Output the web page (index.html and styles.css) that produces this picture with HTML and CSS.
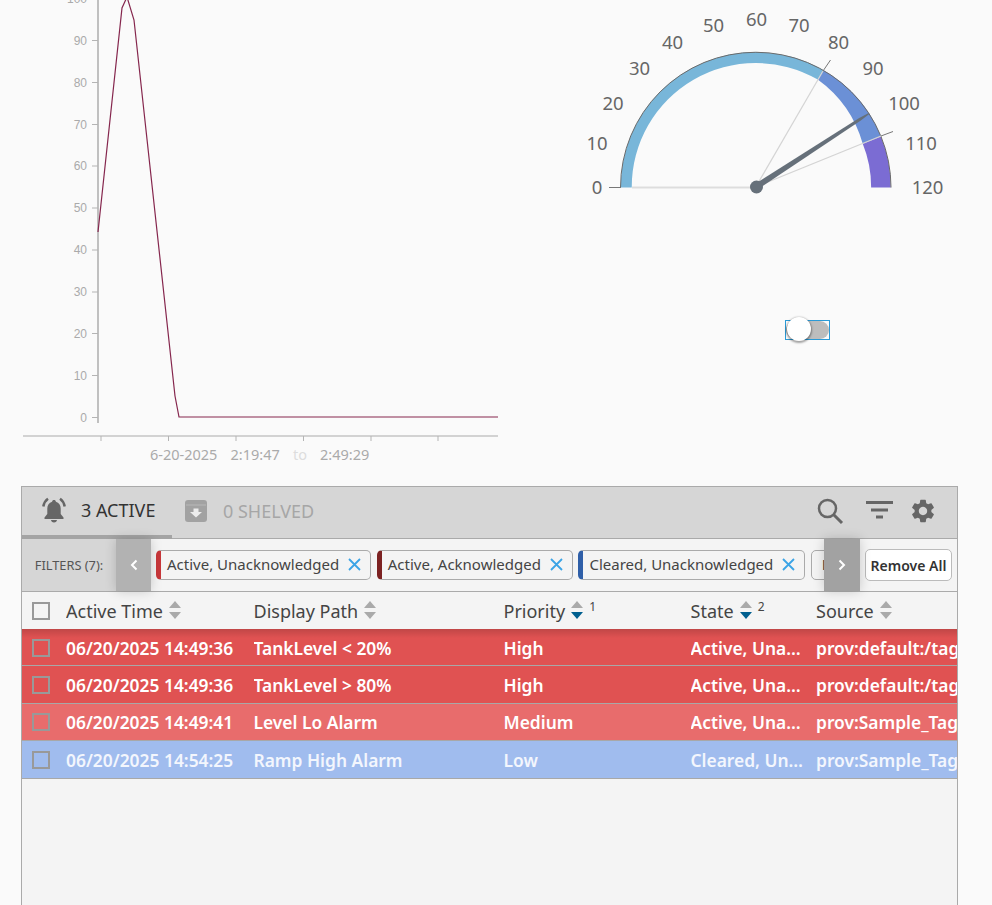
FILE: index.html
```html
<!DOCTYPE html>
<html lang="en">
    <head>
        <meta charset="UTF-8" />
        <meta name="viewport" content="width=device-width, initial-scale=1.0" />
        <title>Tank Dashboard</title>
        <link rel="stylesheet" href="styles.css">
    </head>
    <body>
        <div class="dash">
            <svg class="chart" width="510" height="486" viewBox="0 0 510 486">
                <line class="y-axis" x1="98" y1="-5" x2="98" y2="423" />
                <g class="y-ticks">
                    <line x1="92" y1="-1" x2="98" y2="-1" />
                    <line x1="92" y1="40.5" x2="98" y2="40.5" />
                    <line x1="92" y1="82.5" x2="98" y2="82.5" />
                    <line x1="92" y1="124.5" x2="98" y2="124.5" />
                    <line x1="92" y1="166" x2="98" y2="166" />
                    <line x1="92" y1="208" x2="98" y2="208" />
                    <line x1="92" y1="250" x2="98" y2="250" />
                    <line x1="92" y1="292" x2="98" y2="292" />
                    <line x1="92" y1="333.5" x2="98" y2="333.5" />
                    <line x1="92" y1="375.5" x2="98" y2="375.5" />
                    <line x1="92" y1="417.5" x2="98" y2="417.5" />
                </g>
                <g class="y-labels">
                    <text x="87" y="3">100</text>
                    <text x="87" y="45">90</text>
                    <text x="87" y="87">80</text>
                    <text x="87" y="129">70</text>
                    <text x="87" y="170">60</text>
                    <text x="87" y="212">50</text>
                    <text x="87" y="254">40</text>
                    <text x="87" y="296">30</text>
                    <text x="87" y="338">20</text>
                    <text x="87" y="380">10</text>
                    <text x="87" y="422">0</text>
                </g>
                <polyline class="trace" points="98,232 122,8 127,-3 134,20 175,396 179,417 498,417" />
                <line class="x-axis" x1="23" y1="436" x2="498" y2="436" />
                <g class="x-ticks">
                    <line x1="101" y1="436" x2="101" y2="441" />
                    <line x1="168.5" y1="436" x2="168.5" y2="441" />
                    <line x1="236" y1="436" x2="236" y2="441" />
                    <line x1="303.5" y1="436" x2="303.5" y2="441" />
                    <line x1="371" y1="436" x2="371" y2="441" />
                    <line x1="438" y1="436" x2="438" y2="441" />
                </g>
                <text class="range" x="150" y="460">6-20-2025</text>
                <text class="range" x="230.5" y="460">2:19:47</text>
                <text class="range range-to" x="293" y="460">to</text>
                <text class="range" x="320" y="460">2:49:29</text>
            </svg>

            <svg class="gauge" width="390" height="210" viewBox="570 0 390 210">
                <path class="band-low" d="M620.75 187.500 A135 135 0 0 1 823.25 70.100 L817.75 79.600 A124 124 0 0 0 631.75 187.500 Z" />
                <path class="band-mid" d="M823.25 70.100 A135 135 0 0 1 880.95 136.400 L862.75 143.800 A120 120 0 0 0 817.75 79.600 Z" />
                <path class="band-high" d="M880.95 136.400 A135 135 0 0 1 890.75 187.500 L871.15 187.500 A115.4 115.4 0 0 0 862.75 143.800 Z" />
                <path class="rim" d="M620.5 187.500 A135.25 135.25 0 0 1 891 187.500" />
                <line class="mark-light" x1="632" y1="187.500" x2="752" y2="187.500" />
                <line class="mark-thin" x1="755.75" y1="187" x2="823" y2="71" />
                <line class="mark-thin" x1="755.75" y1="187" x2="881" y2="136" />
                <line class="mark-dark" x1="609" y1="187.500" x2="621" y2="187.500" />
                <line class="mark-dark" x1="823" y1="71" x2="830.5" y2="60" />
                <line class="mark-dark" x1="881" y1="136" x2="893" y2="131.500" />
                <polygon class="needle" points="754.1,184.500 859.2,118 868.7,113.100 869.3,113.900 860.8,120.600 757.4,189.500" />
                <circle class="hub" cx="756.5" cy="187" r="6.5" />
                <g class="dial">
                    <text x="597" y="194">0</text>
                    <text x="597" y="150">10</text>
                    <text x="613" y="110">20</text>
                    <text x="639.5" y="75">30</text>
                    <text x="672.5" y="49">40</text>
                    <text x="713.5" y="32">50</text>
                    <text x="756.5" y="26">60</text>
                    <text x="799" y="32">70</text>
                    <text x="838.5" y="49">80</text>
                    <text x="873" y="75">90</text>
                    <text x="904" y="110">100</text>
                    <text x="921" y="150">110</text>
                    <text x="927.5" y="194">120</text>
                </g>
            </svg>

            <div class="toggle"><span class="track"></span><span class="knob"></span></div>
        </div>

        <div class="alarms">
            <div class="tabs">
                <div class="tab tab-active">
                    <svg width="26" height="26" viewBox="0 0 26 26">
                        <path class="ic-fill" d="M13 3c-1.100 0-1.800.7-1.900 1.700C8 5.600 6.300 8 6.300 11.500v5.500L3.500 20.500v1.500h19v-1.500L19.700 17v-5.500c0-3.500-1.700-5.900-4.800-6.800C14.800 3.700 14.100 3 13 3z" />
                        <path class="ic-fill" d="M10 23h6c0 1-1.300 2.500-3 2.500s-3-1.500-3-2.500z" />
                        <path class="ic-line" d="M7 1.800C4.500 3.500 3 6 2.300 9.500M19 1.800c2.500 1.700 4 4.200 4.700 7.700" />
                    </svg>
                    <span>3 ACTIVE</span>
                </div>
                <div class="tab tab-shelved">
                    <svg width="22" height="22" viewBox="0 0 22 22">
                        <rect class="shelf" width="22" height="22" rx="3" />
                        <line class="shelf-lip" x1="1" y1="5" x2="21" y2="5" />
                        <path class="shelf-arrow" d="M8.500 8.500h5v3.500h3.500L11 17.500 5 12h3.500z" />
                    </svg>
                    <span>0 SHELVED</span>
                </div>
                <div class="tools">
                    <svg class="tool-search" width="28" height="28" viewBox="0 0 28 28">
                        <circle class="ic-line" cx="11.500" cy="11.500" r="8.500" />
                        <line class="ic-line ic-heavy" x1="17.500" y1="17.500" x2="26" y2="26" />
                    </svg>
                    <svg class="tool-filter" width="27" height="20" viewBox="0 0 27 20">
                        <rect class="ic-fill" y="1" width="27" height="3" />
                        <rect class="ic-fill" x="5" y="8.500" width="17" height="3" />
                        <rect class="ic-fill" x="10" y="15.500" width="7" height="3" />
                    </svg>
                    <svg width="28" height="28" viewBox="0 0 24 24">
                        <path class="ic-fill" d="M19.140 12.940c.04-.3.06-.61.06-.94 0-.32-.02-.64-.07-.94l2.030-1.580c.18-.14.23-.41.12-.61l-1.920-3.320c-.12-.22-.37-.29-.59-.22l-2.390.96c-.5-.38-1.030-.7-1.620-.94l-.36-2.540c-.04-.24-.24-.41-.48-.41h-3.840c-.24 0-.43.17-.47.41l-.36 2.540c-.59.24-1.130.57-1.620.94l-2.390-.96c-.22-.08-.47 0-.59.22L2.740 8.870c-.12.21-.08.47.12.61l2.030 1.580c-.05.3-.09.63-.09.94s.02.64.07.94l-2.030 1.580c-.18.14-.23.41-.12.61l1.920 3.320c.12.22.37.29.59.22l2.390-.96c.5.38 1.030.7 1.620.94l.36 2.540c.05.24.24.41.48.41h3.840c.24 0 .44-.17.47-.41l.36-2.540c.59-.24 1.130-.56 1.620-.94l2.390.96c.22.08.47 0 .59-.22l1.920-3.320c.12-.22.07-.47-.12-.61l-2.010-1.580zM12 15.600c-1.980 0-3.600-1.620-3.600-3.600s1.620-3.600 3.600-3.600 3.600 1.620 3.600 3.600-1.620 3.600-3.600 3.600z" />
                    </svg>
                </div>
            </div>

            <div class="filters">
                <div class="filters-label">FILTERS (7):</div>
                <div class="pager pager-left">
                    <svg width="8" height="12" viewBox="0 0 8 12"><path d="M6.500 1.500 2 6l4.500 4.500" /></svg>
                </div>
                <div class="chips">
                    <div class="chip chip-red"><span>Active, Unacknowledged</span><svg class="chip-x" width="13" height="13" viewBox="0 0 13 13"><path d="M1 1l11 11M12 1 1 12" /></svg></div>
                    <div class="chip chip-maroon"><span>Active, Acknowledged</span><svg class="chip-x" width="13" height="13" viewBox="0 0 13 13"><path d="M1 1l11 11M12 1 1 12" /></svg></div>
                    <div class="chip chip-blue"><span>Cleared, Unacknowledged</span><svg class="chip-x" width="13" height="13" viewBox="0 0 13 13"><path d="M1 1l11 11M12 1 1 12" /></svg></div>
                    <div class="chip chip-plain"><span>High</span></div>
                </div>
                <div class="pager pager-right">
                    <svg width="8" height="12" viewBox="0 0 8 12"><path d="M1.500 1.500 6 6l-4.500 4.500" /></svg>
                </div>
                <div class="filters-end">
                    <button class="remove-all">Remove All</button>
                </div>
            </div>

            <div class="row head">
                <div class="cell-check"><span class="check"></span></div>
                <div class="cell">Active Time <span class="sort"><i class="up"></i><i class="down"></i></span></div>
                <div class="cell">Display Path <span class="sort"><i class="up"></i><i class="down"></i></span></div>
                <div class="cell">Priority <span class="sort sorted"><i class="up"></i><i class="down"></i></span><sup>1</sup></div>
                <div class="cell">State <span class="sort sorted"><i class="up"></i><i class="down"></i></span><sup>2</sup></div>
                <div class="cell">Source <span class="sort"><i class="up"></i><i class="down"></i></span></div>
            </div>
            <div class="row alarm high first">
                <div class="cell-check"><span class="check"></span></div>
                <div class="cell">06/20/2025 14:49:36</div>
                <div class="cell">TankLevel &lt; 20%</div>
                <div class="cell">High</div>
                <div class="cell clip">Active, Unacknowledged</div>
                <div class="cell">prov:default:/tag:TankLevel</div>
            </div>
            <div class="row alarm high">
                <div class="cell-check"><span class="check"></span></div>
                <div class="cell">06/20/2025 14:49:36</div>
                <div class="cell">TankLevel &gt; 80%</div>
                <div class="cell">High</div>
                <div class="cell clip">Active, Unacknowledged</div>
                <div class="cell">prov:default:/tag:TankLevel</div>
            </div>
            <div class="row alarm medium">
                <div class="cell-check"><span class="check"></span></div>
                <div class="cell">06/20/2025 14:49:41</div>
                <div class="cell">Level Lo Alarm</div>
                <div class="cell">Medium</div>
                <div class="cell clip">Active, Unacknowledged</div>
                <div class="cell">prov:Sample_Tags:/tag:Level</div>
            </div>
            <div class="row alarm low">
                <div class="cell-check"><span class="check"></span></div>
                <div class="cell">06/20/2025 14:54:25</div>
                <div class="cell">Ramp High Alarm</div>
                <div class="cell">Low</div>
                <div class="cell clip">Cleared, Unacknowledged</div>
                <div class="cell">prov:Sample_Tags:/tag:Ramp</div>
            </div>
        </div>
    </body>
</html>
```

FILE: styles.css
```css
body {
    font-family: "Noto Sans", sans-serif;
    margin: 0;
    height: 100vh;
    overflow: hidden;
    background-color: #fafafa;
    color: #444;
}

/* top canvas: chart, gauge and toggle */
.dash {
    position: relative;
    display: flex;
    height: 486px;
}
.chart {
    display: block;
}
.gauge {
    display: block;
    margin-left: 60px;
}
.y-axis {
    stroke: #c0c0c0;
    stroke-width: 2;
}
.y-ticks line,
.x-ticks line {
    stroke: #b4b4b4;
    stroke-width: 1;
}
.y-labels text {
    font-family: "Liberation Sans", sans-serif;
    font-size: 12px;
    fill: #aaa;
    text-anchor: end;
}
.trace {
    fill: none;
    stroke: #85264d;
    stroke-width: 1.2;
}
.x-axis {
    stroke: #aaa;
    stroke-width: 1;
}
.range {
    font-size: 14.5px;
    fill: #aaa;
}
.range-to {
    fill: #ddd;
}
.band-low {
    fill: #78b6d9;
}
.band-mid {
    fill: #6b90d6;
}
.band-high {
    fill: #7b6cd3;
}
.rim {
    fill: none;
    stroke: #6a6a6a;
    stroke-width: 1;
}
.mark-light {
    stroke: #ddd;
    stroke-width: 2;
}
.mark-thin {
    stroke: #d4d4d4;
    stroke-width: 1.2;
}
.mark-dark {
    stroke: #777;
    stroke-width: 1;
}
.needle,
.hub {
    fill: #66707a;
}
.dial text {
    font-size: 18.5px;
    fill: #666;
    text-anchor: middle;
}
.toggle {
    position: absolute;
    left: 785px;
    top: 320px;
    display: flex;
    width: 43px;
    height: 18px;
    border: 1px solid #2b9ad6;
}
.track {
    flex: 1;
    background-color: #bdbdbd;
    border-radius: 9px;
}
.knob {
    position: absolute;
    left: 1px;
    top: -4px;
    width: 24px;
    height: 24px;
    border-radius: 50%;
    background-color: #fff;
    box-shadow: 0 1px 2px 1px rgba(0, 0, 0, 0.35);
}

/* alarm table */
.alarms {
    margin-left: 21px;
    width: 935px;
    height: 418px;
    border: 1px solid #aaa;
    border-bottom: none;
    background-color: #f4f4f4;
    overflow: hidden;
}
.tabs {
    display: flex;
    align-items: center;
    height: 52px;
    background-color: #d6d6d6;
    box-sizing: border-box;
    border-bottom: 1px solid #aaa;
}
.tab {
    display: flex;
    align-items: center;
    font-size: 18px;
}
.tab-active {
    box-sizing: border-box;
    width: 150px;
    height: 52px;
    padding: 0 0 1px 19px;
    gap: 14px;
    color: #333;
    border-bottom: 4px solid #a4a4a4;
}
.tab-shelved {
    padding-left: 13px;
    gap: 16px;
    margin-bottom: 4px;
    color: #a6a6a6;
}
.tools {
    display: flex;
    align-items: center;
    gap: 16px;
    margin-left: auto;
    margin-bottom: 4px;
    padding-right: 20px;
}
.tool-search {
    margin-right: 6px;
}
.tool-filter {
    margin-top: -2px;
}
.ic-fill {
    fill: #666;
}
.ic-line {
    fill: none;
    stroke: #666;
    stroke-width: 2.5;
}
.ic-heavy {
    stroke-width: 3;
}
.shelf {
    fill: #a2a2a2;
}
.shelf-lip {
    stroke: #b8b8b8;
    stroke-width: 1;
}
.shelf-arrow {
    fill: #ececec;
}
.filters {
    display: flex;
    height: 52px;
    border-bottom: 1px solid #aaa;
}
.filters-label {
    display: flex;
    align-items: center;
    justify-content: center;
    width: 94px;
    font-size: 12.8px;
    color: #555;
    background-color: #d6d6d6;
}
.pager {
    display: flex;
    align-items: center;
    justify-content: center;
    flex: none;
    width: 35px;
    position: relative;
    box-shadow: 0 0 12px rgba(0, 0, 0, 0.18);
}
.pager path {
    fill: none;
    stroke: #fff;
    stroke-width: 2;
}
.pager-left {
    background-color: #b2b2b2;
}
.pager-right {
    width: 36px;
    background-color: #a2a2a2;
}
.chips {
    display: flex;
    align-items: center;
    gap: 5.5px;
    flex: 1;
    min-width: 0;
    padding: 0 0 1px 5px;
    overflow: hidden;
}
.chip {
    display: flex;
    align-items: center;
    flex: none;
    box-sizing: border-box;
    height: 30px;
    padding: 0 9px 2px 6px;
    gap: 9px;
    font-size: 15px;
    color: #444;
    border: 1px solid #aaa;
    border-left-width: 5px;
    border-radius: 5px;
}
.chip-red {
    border-left-color: #c8373a;
}
.chip-maroon {
    border-left-color: #7c2222;
}
.chip-blue {
    border-left-color: #2f5fa8;
}
.chip-plain {
    border-left-width: 1px;
    padding-left: 10px;
}
.chip-x {
    flex: none;
    margin-top: 2px;
}
.chip-x path {
    fill: none;
    stroke: #3ba4e6;
    stroke-width: 1.8;
}
.filters-end {
    display: flex;
    align-items: center;
    justify-content: center;
    width: 97px;
    flex: none;
}
.remove-all {
    width: 87px;
    height: 32px;
    padding: 1px 0 0;
    font-family: "Noto Sans", sans-serif;
    font-size: 14px;
    font-weight: 600;
    color: #333;
    background-color: #fff;
    border: 1px solid #bbb;
    border-radius: 5px;
}
.row {
    display: grid;
    grid-template-columns: 44px 187.5px 250px 187px 125.5px 141px;
    align-items: center;
    font-size: 17.4px;
    white-space: nowrap;
    overflow: hidden;
}
.cell {
    overflow: hidden;
}
.clip {
    padding-right: 12px;
    text-overflow: ellipsis;
}
.cell-check {
    padding-left: 10px;
    display: flex;
}
.check {
    box-sizing: border-box;
    width: 18px;
    height: 18px;
    border: 2px solid #999;
}
.head {
    height: 37px;
    font-size: 18px;
    color: #444;
}
.head .cell {
    display: flex;
    align-items: center;
    padding-top: 1px;
}
.head sup {
    font-size: 12px;
    line-height: 1;
    margin: -8px 0 0 6px;
}
.sort {
    display: inline-flex;
    flex-direction: column;
    gap: 4px;
    margin-left: 6px;
    margin-top: -3px;
}
.sort i {
    display: block;
    width: 0;
    height: 0;
    border-left: 6px solid transparent;
    border-right: 6px solid transparent;
}
.sort .up {
    border-bottom: 7px solid #aaa;
}
.sort .down {
    border-top: 7px solid #aaa;
}
.sorted .down {
    border-top-color: #005f8f;
}
.alarm {
    box-sizing: border-box;
    height: 37.4px;
    padding-top: 1px;
    color: #fff;
    font-weight: 600;
    border-bottom: 1px solid #a8a8a8;
}
.high {
    background-color: #e05252;
}
.first {
    background-image: linear-gradient(rgba(0, 0, 0, 0.14), rgba(0, 0, 0, 0) 9px);
}
.medium {
    background-color: #e86c6c;
}
.low {
    background-color: #a0bcee;
    color: #f3f6fd;
}
```
